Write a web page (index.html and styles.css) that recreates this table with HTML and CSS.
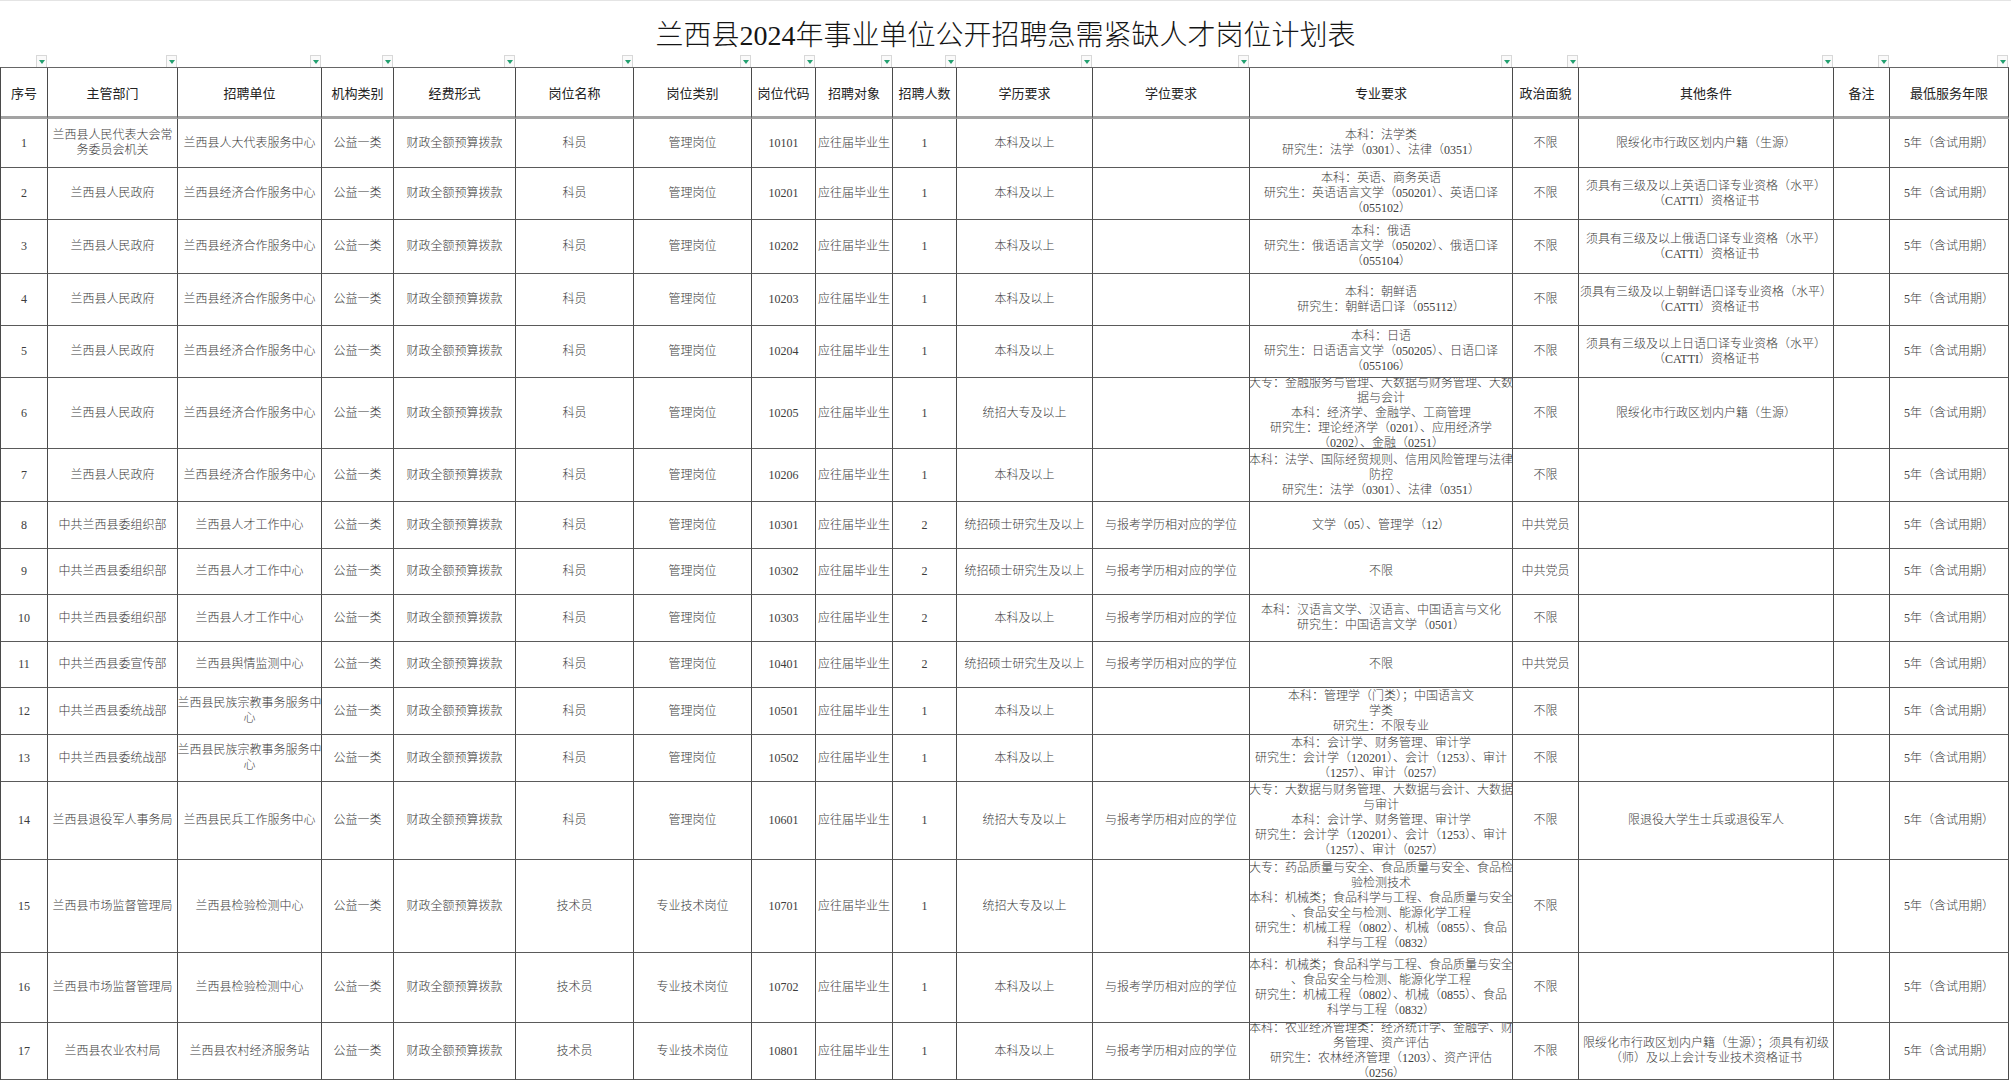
FILE: index.html
```html
<!DOCTYPE html>
<html lang="zh-CN">
<head>
<meta charset="utf-8">
<title>兰西县2024年事业单位公开招聘急需紧缺人才岗位计划表</title>
<link rel="stylesheet" href="styles.css">
</head>
<body>
<div class="page">
  <div class="title">兰西县2024年事业单位公开招聘急需紧缺人才岗位计划表</div>
  <div class="filters">
    <div class="fc"><span class="fb"></span></div><div class="fc"><span class="fb"></span></div><div class="fc"><span class="fb"></span></div><div class="fc"><span class="fb"></span></div><div class="fc"><span class="fb"></span></div><div class="fc"><span class="fb"></span></div><div class="fc"><span class="fb"></span></div><div class="fc"><span class="fb"></span></div><div class="fc"><span class="fb"></span></div><div class="fc"><span class="fb"></span></div><div class="fc"><span class="fb"></span></div><div class="fc"><span class="fb"></span></div><div class="fc"><span class="fb"></span></div><div class="fc"><span class="fb"></span></div><div class="fc"><span class="fb"></span></div><div class="fc"><span class="fb"></span></div><div class="fc"><span class="fb"></span></div>
  </div>
  <div class="sheet">
    <div class="c h">序号</div><div class="c h">主管部门</div><div class="c h">招聘单位</div><div class="c h">机构类别</div><div class="c h">经费形式</div><div class="c h">岗位名称</div><div class="c h">岗位类别</div><div class="c h">岗位代码</div><div class="c h">招聘对象</div><div class="c h">招聘人数</div><div class="c h">学历要求</div><div class="c h">学位要求</div><div class="c h">专业要求</div><div class="c h">政治面貌</div><div class="c h">其他条件</div><div class="c h">备注</div><div class="c h">最低服务年限</div>

    <div class="c">1</div><div class="c"><span>兰西县人民代表大会常<br>务委员会机关</span></div><div class="c">兰西县人大代表服务中心</div><div class="c">公益一类</div><div class="c">财政全额预算拨款</div><div class="c">科员</div><div class="c">管理岗位</div><div class="c">10101</div><div class="c">应往届毕业生</div><div class="c">1</div><div class="c">本科及以上</div><div class="c"></div><div class="c"><span>本科：法学类<br>研究生：法学（0301）、法律（0351）</span></div><div class="c">不限</div><div class="c">限绥化市行政区划内户籍（生源）</div><div class="c"></div><div class="c">5年（含试用期）</div>

    <div class="c">2</div><div class="c">兰西县人民政府</div><div class="c">兰西县经济合作服务中心</div><div class="c">公益一类</div><div class="c">财政全额预算拨款</div><div class="c">科员</div><div class="c">管理岗位</div><div class="c">10201</div><div class="c">应往届毕业生</div><div class="c">1</div><div class="c">本科及以上</div><div class="c"></div><div class="c"><span>本科：英语、商务英语<br>研究生：英语语言文学（050201）、英语口译<br>（055102）</span></div><div class="c">不限</div><div class="c"><span>须具有三级及以上英语口译专业资格（水平）<br>（CATTI）资格证书</span></div><div class="c"></div><div class="c">5年（含试用期）</div>

    <div class="c">3</div><div class="c">兰西县人民政府</div><div class="c">兰西县经济合作服务中心</div><div class="c">公益一类</div><div class="c">财政全额预算拨款</div><div class="c">科员</div><div class="c">管理岗位</div><div class="c">10202</div><div class="c">应往届毕业生</div><div class="c">1</div><div class="c">本科及以上</div><div class="c"></div><div class="c"><span>本科：俄语<br>研究生：俄语语言文学（050202）、俄语口译<br>（055104）</span></div><div class="c">不限</div><div class="c"><span>须具有三级及以上俄语口译专业资格（水平）<br>（CATTI）资格证书</span></div><div class="c"></div><div class="c">5年（含试用期）</div>

    <div class="c">4</div><div class="c">兰西县人民政府</div><div class="c">兰西县经济合作服务中心</div><div class="c">公益一类</div><div class="c">财政全额预算拨款</div><div class="c">科员</div><div class="c">管理岗位</div><div class="c">10203</div><div class="c">应往届毕业生</div><div class="c">1</div><div class="c">本科及以上</div><div class="c"></div><div class="c"><span>本科：朝鲜语<br>研究生：朝鲜语口译（055112）</span></div><div class="c">不限</div><div class="c"><span>须具有三级及以上朝鲜语口译专业资格（水平）<br>（CATTI）资格证书</span></div><div class="c"></div><div class="c">5年（含试用期）</div>

    <div class="c">5</div><div class="c">兰西县人民政府</div><div class="c">兰西县经济合作服务中心</div><div class="c">公益一类</div><div class="c">财政全额预算拨款</div><div class="c">科员</div><div class="c">管理岗位</div><div class="c">10204</div><div class="c">应往届毕业生</div><div class="c">1</div><div class="c">本科及以上</div><div class="c"></div><div class="c"><span>本科：日语<br>研究生：日语语言文学（050205）、日语口译<br>（055106）</span></div><div class="c">不限</div><div class="c"><span>须具有三级及以上日语口译专业资格（水平）<br>（CATTI）资格证书</span></div><div class="c"></div><div class="c">5年（含试用期）</div>

    <div class="c">6</div><div class="c">兰西县人民政府</div><div class="c">兰西县经济合作服务中心</div><div class="c">公益一类</div><div class="c">财政全额预算拨款</div><div class="c">科员</div><div class="c">管理岗位</div><div class="c">10205</div><div class="c">应往届毕业生</div><div class="c">1</div><div class="c">统招大专及以上</div><div class="c"></div><div class="c"><span>大专：金融服务与管理、大数据与财务管理、大数<br>据与会计<br>本科：经济学、金融学、工商管理<br>研究生：理论经济学（0201）、应用经济学<br>（0202）、金融（0251）</span></div><div class="c">不限</div><div class="c">限绥化市行政区划内户籍（生源）</div><div class="c"></div><div class="c">5年（含试用期）</div>

    <div class="c">7</div><div class="c">兰西县人民政府</div><div class="c">兰西县经济合作服务中心</div><div class="c">公益一类</div><div class="c">财政全额预算拨款</div><div class="c">科员</div><div class="c">管理岗位</div><div class="c">10206</div><div class="c">应往届毕业生</div><div class="c">1</div><div class="c">本科及以上</div><div class="c"></div><div class="c"><span>本科：法学、国际经贸规则、信用风险管理与法律<br>防控<br>研究生：法学（0301）、法律（0351）</span></div><div class="c">不限</div><div class="c"></div><div class="c"></div><div class="c">5年（含试用期）</div>

    <div class="c">8</div><div class="c">中共兰西县委组织部</div><div class="c">兰西县人才工作中心</div><div class="c">公益一类</div><div class="c">财政全额预算拨款</div><div class="c">科员</div><div class="c">管理岗位</div><div class="c">10301</div><div class="c">应往届毕业生</div><div class="c">2</div><div class="c">统招硕士研究生及以上</div><div class="c">与报考学历相对应的学位</div><div class="c">文学（05）、管理学（12）</div><div class="c">中共党员</div><div class="c"></div><div class="c"></div><div class="c">5年（含试用期）</div>

    <div class="c">9</div><div class="c">中共兰西县委组织部</div><div class="c">兰西县人才工作中心</div><div class="c">公益一类</div><div class="c">财政全额预算拨款</div><div class="c">科员</div><div class="c">管理岗位</div><div class="c">10302</div><div class="c">应往届毕业生</div><div class="c">2</div><div class="c">统招硕士研究生及以上</div><div class="c">与报考学历相对应的学位</div><div class="c">不限</div><div class="c">中共党员</div><div class="c"></div><div class="c"></div><div class="c">5年（含试用期）</div>

    <div class="c">10</div><div class="c">中共兰西县委组织部</div><div class="c">兰西县人才工作中心</div><div class="c">公益一类</div><div class="c">财政全额预算拨款</div><div class="c">科员</div><div class="c">管理岗位</div><div class="c">10303</div><div class="c">应往届毕业生</div><div class="c">2</div><div class="c">本科及以上</div><div class="c">与报考学历相对应的学位</div><div class="c"><span>本科：汉语言文学、汉语言、中国语言与文化<br>研究生：中国语言文学（0501）</span></div><div class="c">不限</div><div class="c"></div><div class="c"></div><div class="c">5年（含试用期）</div>

    <div class="c">11</div><div class="c">中共兰西县委宣传部</div><div class="c">兰西县舆情监测中心</div><div class="c">公益一类</div><div class="c">财政全额预算拨款</div><div class="c">科员</div><div class="c">管理岗位</div><div class="c">10401</div><div class="c">应往届毕业生</div><div class="c">2</div><div class="c">统招硕士研究生及以上</div><div class="c">与报考学历相对应的学位</div><div class="c">不限</div><div class="c">中共党员</div><div class="c"></div><div class="c"></div><div class="c">5年（含试用期）</div>

    <div class="c">12</div><div class="c">中共兰西县委统战部</div><div class="c"><span>兰西县民族宗教事务服务中<br>心</span></div><div class="c">公益一类</div><div class="c">财政全额预算拨款</div><div class="c">科员</div><div class="c">管理岗位</div><div class="c">10501</div><div class="c">应往届毕业生</div><div class="c">1</div><div class="c">本科及以上</div><div class="c"></div><div class="c"><span>本科：管理学（门类）；中国语言文<br>学类<br>研究生：不限专业</span></div><div class="c">不限</div><div class="c"></div><div class="c"></div><div class="c">5年（含试用期）</div>

    <div class="c">13</div><div class="c">中共兰西县委统战部</div><div class="c"><span>兰西县民族宗教事务服务中<br>心</span></div><div class="c">公益一类</div><div class="c">财政全额预算拨款</div><div class="c">科员</div><div class="c">管理岗位</div><div class="c">10502</div><div class="c">应往届毕业生</div><div class="c">1</div><div class="c">本科及以上</div><div class="c"></div><div class="c"><span>本科：会计学、财务管理、审计学<br>研究生：会计学（120201）、会计（1253）、审计<br>（1257）、审计（0257）</span></div><div class="c">不限</div><div class="c"></div><div class="c"></div><div class="c">5年（含试用期）</div>

    <div class="c">14</div><div class="c">兰西县退役军人事务局</div><div class="c">兰西县民兵工作服务中心</div><div class="c">公益一类</div><div class="c">财政全额预算拨款</div><div class="c">科员</div><div class="c">管理岗位</div><div class="c">10601</div><div class="c">应往届毕业生</div><div class="c">1</div><div class="c">统招大专及以上</div><div class="c">与报考学历相对应的学位</div><div class="c"><span>大专：大数据与财务管理、大数据与会计、大数据<br>与审计<br>本科：会计学、财务管理、审计学<br>研究生：会计学（120201）、会计（1253）、审计<br>（1257）、审计（0257）</span></div><div class="c">不限</div><div class="c">限退役大学生士兵或退役军人</div><div class="c"></div><div class="c">5年（含试用期）</div>

    <div class="c">15</div><div class="c">兰西县市场监督管理局</div><div class="c">兰西县检验检测中心</div><div class="c">公益一类</div><div class="c">财政全额预算拨款</div><div class="c">技术员</div><div class="c">专业技术岗位</div><div class="c">10701</div><div class="c">应往届毕业生</div><div class="c">1</div><div class="c">统招大专及以上</div><div class="c"></div><div class="c"><span>大专：药品质量与安全、食品质量与安全、食品检<br>验检测技术<br>本科：机械类；食品科学与工程、食品质量与安全<br>、食品安全与检测、能源化学工程<br>研究生：机械工程（0802）、机械（0855）、食品<br>科学与工程（0832）</span></div><div class="c">不限</div><div class="c"></div><div class="c"></div><div class="c">5年（含试用期）</div>

    <div class="c">16</div><div class="c">兰西县市场监督管理局</div><div class="c">兰西县检验检测中心</div><div class="c">公益一类</div><div class="c">财政全额预算拨款</div><div class="c">技术员</div><div class="c">专业技术岗位</div><div class="c">10702</div><div class="c">应往届毕业生</div><div class="c">1</div><div class="c">本科及以上</div><div class="c">与报考学历相对应的学位</div><div class="c"><span>本科：机械类；食品科学与工程、食品质量与安全<br>、食品安全与检测、能源化学工程<br>研究生：机械工程（0802）、机械（0855）、食品<br>科学与工程（0832）</span></div><div class="c">不限</div><div class="c"></div><div class="c"></div><div class="c">5年（含试用期）</div>

    <div class="c">17</div><div class="c">兰西县农业农村局</div><div class="c">兰西县农村经济服务站</div><div class="c">公益一类</div><div class="c">财政全额预算拨款</div><div class="c">技术员</div><div class="c">专业技术岗位</div><div class="c">10801</div><div class="c">应往届毕业生</div><div class="c">1</div><div class="c">本科及以上</div><div class="c">与报考学历相对应的学位</div><div class="c"><span>本科：农业经济管理类：经济统计学、金融学、财<br>务管理、资产评估<br>研究生：农林经济管理（1203）、资产评估<br>（0256）</span></div><div class="c">不限</div><div class="c"><span>限绥化市行政区划内户籍（生源）；须具有初级<br>（师）及以上会计专业技术资格证书</span></div><div class="c"></div><div class="c">5年（含试用期）</div>
  </div>
</div>
</body>
</html>
```

FILE: styles.css
```css
* { box-sizing: border-box; }
html, body { margin: 0; padding: 0; background: #fff; }
body { overflow: hidden; }
.page {
  width: 2011px;
  height: 1080px;
  overflow: hidden;
  border-top: 1px solid #e4e4e4;
}
.title {
  height: 53px;
  padding-top: 21px;
  text-align: center;
  font-family: "Liberation Serif", "Noto Sans CJK SC", serif;
  font-weight: 300;
  font-size: 28px;
  line-height: 28px;
  color: #151515;
}
.filters {
  display: grid;
  grid-template-columns: 47px 130px 144px 72px 122px 118px 118px 64px 77px 64px 136px 157px 263px 66px 255px 56px 119px;
  height: 13px;
  padding-left: 1px;
}
.fc {
  display: flex;
  justify-content: flex-end;
  align-items: flex-end;
  padding-right: 1px;
}
.fb {
  position: relative;
  width: 11px;
  height: 12px;
  background: #fafafa;
  border: 1px solid #d8d8d8;
  border-bottom: none;
}
.fb::after {
  content: "";
  position: absolute;
  left: 2px;
  top: 4px;
  border-left: 3px solid transparent;
  border-right: 3px solid transparent;
  border-top: 4px solid #23a070;
}
.sheet {
  display: grid;
  width: max-content;
  grid-template-columns: 47px 130px 144px 72px 122px 118px 118px 64px 77px 64px 136px 157px 263px 66px 255px 56px 119px;
  grid-template-rows: 51px 49px 52px 54px 52px 52px 71px 53px 47px 46px 47px 46px 47px 47px 78px 93px 70px 57px;
  border-left: 1px solid #4a4a4a;
  border-top: 1px solid #666;
  font-family: "Liberation Serif", "Noto Sans CJK SC", serif;
  font-weight: 300;
  font-size: 12px;
  line-height: 15px;
  color: #3c3c3c;
}
.c {
  display: flex;
  align-items: center;
  justify-content: center;
  text-align: center;
  white-space: nowrap;
  overflow: hidden;
  border-right: 1px solid #4a4a4a;
  border-bottom: 1px solid #5a5a5a;
  padding: 0 1px;
}
.c span { display: block; }
.h {
  font-family: "Noto Sans CJK SC", sans-serif;
  font-weight: 400;
  font-size: 13px;
  color: #222;
  border-bottom: 3px solid #a3a3a3;
}
```
